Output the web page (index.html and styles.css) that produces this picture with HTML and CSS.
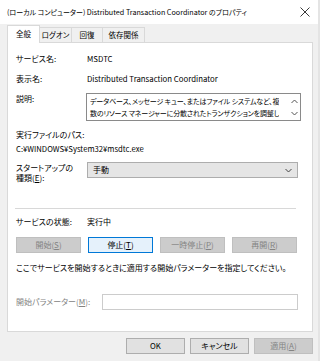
FILE: index.html
```html
<!DOCTYPE html>
<html lang="ja">
<head>
<meta charset="utf-8">
<title>プロパティ</title>
<link rel="stylesheet" href="styles.css">
</head>
<body>
<div class="window">
  <div class="titlebar">
    <span class="title">(ローカル コンピューター) <span class="lat">Distributed Transaction Coordinator</span> のプロパティ</span>
    <svg class="close" width="10" height="10" viewBox="0 0 10 10"><path d="M0.5 0.5L9.5 9.5M9.5 0.5L0.5 9.5" stroke="#222" stroke-width="0.9" fill="none"/></svg>
  </div>
  <div class="tabs">
    <div class="tab active t-general">全般</div>
    <div class="tab t-logon">ログオン</div>
    <div class="tab t-recovery">回復</div>
    <div class="tab t-deps">依存関係</div>
  </div>
  <div class="panel">
    <div class="row r-name"><span class="label">サービス名:</span><span class="value lat">MSDTC</span></div>
    <div class="row r-disp"><span class="label">表示名:</span><span class="value lat">Distributed Transaction Coordinator</span></div>
    <div class="row r-desc">
      <span class="label">説明:</span>
      <div class="desc">
        <div class="desc-text">データベース、メッセージ キュー、またはファイル システムなど、複<br>数のリソース マネージャーに分散されたトランザクションを調整し</div>
        <div class="scroll">
          <svg width="7" height="5" viewBox="0 0 7 5"><path d="M0.5 4L3.5 1L6.5 4" stroke="#555" stroke-width="1" fill="none"/></svg>
          <svg width="7" height="5" viewBox="0 0 7 5"><path d="M0.5 1L3.5 4L6.5 1" stroke="#555" stroke-width="1" fill="none"/></svg>
        </div>
      </div>
    </div>
    <div class="path-label">実行ファイルのパス:</div>
    <div class="path lat">C:¥WINDOWS¥System32¥msdtc.exe</div>
    <div class="row r-start">
      <span class="label two">スタートアップの<br>種類(<u>E</u>):</span>
      <div class="combo">
        <span>手動</span>
        <svg width="7" height="5" viewBox="0 0 7 5"><path d="M0.5 1L3.5 4L6.5 1" stroke="#444" stroke-width="1" fill="none"/></svg>
      </div>
    </div>
    <div class="sep"></div>
    <div class="row r-status"><span class="label">サービスの状態:</span><span class="value">実行中</span></div>
    <div class="svc-buttons">
      <div class="btn disabled">開始(<u>S</u>)</div>
      <div class="btn default">停止(<u>T</u>)</div>
      <div class="btn disabled">一時停止(<u>P</u>)</div>
      <div class="btn disabled">再開(<u>R</u>)</div>
    </div>
    <div class="hint">ここでサービスを開始するときに適用する開始パラメーターを指定してください。</div>
    <div class="row r-param">
      <span class="label param-label">開始パラメーター(<u>M</u>):</span>
      <div class="input"></div>
    </div>
  </div>
  <div class="footer">
    <div class="btn normal lat">OK</div>
    <div class="btn normal">キャンセル</div>
    <div class="btn disabled">適用(<u>A</u>)</div>
  </div>
</div>
</body>
</html>
```
FILE: styles.css
```css
html, body {
  margin: 0;
  padding: 0;
}
body {
  width: 320px;
  height: 361px;
  overflow: hidden;
  background: #f0f0f0;
  font-family: "Noto Sans CJK JP", sans-serif;
  font-size: 8px;
  font-feature-settings: "palt";
  color: #000;
}
u { text-decoration-thickness: 1px; text-underline-offset: 1px; }
.lat {
  font-family: "Noto Sans CJK JP", "Noto Sans", sans-serif;
  font-size: 7.8px;
  font-feature-settings: normal;
}
.window {
  box-sizing: border-box;
  width: 320px;
  height: 361px;
  border-right: 2px solid #e4e4e4;
}
.titlebar {
  height: 24px;
  background: #fff;
  display: flex;
  align-items: center;
  justify-content: space-between;
  padding: 0 6px 0 7px;
  font-size: 7px;
}
.titlebar .lat { font-size: 7.2px; }
.close { margin-right: 2px; }
.tabs {
  display: flex;
  height: 18px;
  padding-left: 7px;
  box-sizing: border-box;
  padding-top: 2px;
  align-items: flex-end;
  font-size: 7.5px;
}
.tab {
  box-sizing: border-box;
  height: 15px;
  line-height: 14px;
  text-align: center;
  border: 1px solid #d9d9d9;
  border-bottom: none;
  border-left: none;
  background: #f0f0f0;
}
.t-general { width: 33px; }
.t-logon { width: 32px; }
.t-recovery { width: 31px; }
.t-deps { width: 42px; }
.tab.active {
  height: 18px;
  line-height: 16px;
  border-left: 1px solid #d9d9d9;
  margin-bottom: -1px;
  background: #fff;
  position: relative;
  z-index: 1;
}
.panel {
  box-sizing: border-box;
  width: 306px;
  height: 290px;
  margin-left: 7px;
  background: #fff;
  border: 1px solid #d9d9d9;
  padding: 10px 8px 0 8px;
}
.row {
  display: flex;
  line-height: 12px;
}
.label { width: 71px; flex: none; }
.r-disp { margin-top: 8px; }
.r-desc { margin-top: 8px; }
.r-desc .label { width: 70px; }
.desc {
  width: 215px;
  height: 28px;
  box-sizing: border-box;
  border: 1px solid #8a8a8a;
  display: flex;
  justify-content: space-between;
}
.desc-text {
  padding: 1px 0 0 3px;
  line-height: 12px;
  font-size: 7px;
  letter-spacing: -0.15px;
  white-space: nowrap;
  overflow: hidden;
}
.scroll {
  width: 12px;
  flex: none;
  display: flex;
  flex-direction: column;
  justify-content: space-between;
  align-items: center;
  padding: 5px 0 4px;
}
.path-label { margin-top: 8px; line-height: 12px; }
.path { margin-top: 2px; line-height: 12px; font-size: 7.7px; }
.r-start { margin-top: 7px; }
.label.two { line-height: 10px; padding-top: 1px; }
.combo {
  box-sizing: border-box;
  width: 211px;
  height: 16px;
  background: #e5e5e5;
  border: 1px solid #adadad;
  display: flex;
  justify-content: space-between;
  align-items: center;
  padding: 0 5px 0 5px;
}
.sep {
  margin: 25px 0 0 -1px;
  width: 281px;
  height: 1px;
  background: #d8d8d8;
}
.r-status { margin-top: 7px; }
.svc-buttons {
  display: flex;
  gap: 7px;
  margin-top: 9px;
}
.btn {
  box-sizing: border-box;
  width: 65px;
  height: 16px;
  line-height: 14px;
  text-align: center;
  border: 1px solid #adadad;
  background: #e1e1e1;
}
.btn.disabled {
  background: #cccccc;
  border-color: #bfbfbf;
  color: #838383;
}
.btn.default {
  background: #e5f1fb;
  border-color: #0078d7;
}
.hint { margin-top: 9px; line-height: 12px; }
.r-param { margin-top: 20px; align-items: center; }
.param-label { width: 86px; color: #838383; }
.input {
  box-sizing: border-box;
  width: 196px;
  height: 16px;
  border: 1px solid #cccccc;
  background: #fff;
}
.footer {
  display: flex;
  justify-content: flex-end;
  gap: 5px;
  padding: 6px 5px 0 0;
}
.footer .btn { width: 59px; }
.footer .lat { font-size: 7.8px; }
```
